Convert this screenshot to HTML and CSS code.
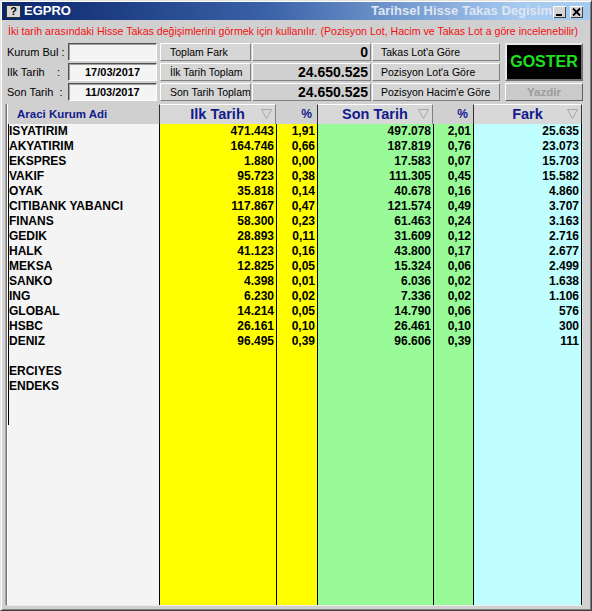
FILE: index.html
```html
<!DOCTYPE html>
<html lang="tr">
<head>
<meta charset="utf-8">
<title>EGPRO</title>
<link rel="stylesheet" href="styles.css">
</head>
<body>
<div class="window">
  <div class="titlebar">
    <div class="t-icon">?</div>
    <div class="t-name">EGPRO</div>
    <div class="t-caption">Tarihsel Hisse Takas Degisim</div>
    <div class="t-btn">
      <svg width="13" height="12" viewBox="0 0 13 12"><rect x="3" y="8" width="6" height="2" fill="#000"/></svg>
    </div>
    <div class="t-btn t-close">
      <svg width="13" height="12" viewBox="0 0 13 12"><path d="M3 2.5 L10 9.5 M10 2.5 L3 9.5" stroke="#000" stroke-width="1.8"/></svg>
    </div>
  </div>

  <div class="info">İki tarih arasındaki Hisse Takas değişimlerini görmek için kullanılır. (Pozisyon Lot, Hacim ve Takas Lot a göre incelenebilir)</div>

  <div class="form">
    <div class="lbl">Kurum Bul :</div>
    <div class="inp"></div>
    <div class="btn">Toplam Fark</div>
    <div class="val">0</div>
    <div class="btn btn-r">Takas Lot'a Göre</div>
    <div class="goster">GOSTER</div>

    <div class="lbl">Ilk Tarih&nbsp;&nbsp;&nbsp;&nbsp;:</div>
    <div class="inp">17/03/2017</div>
    <div class="btn">İlk Tarih Toplam</div>
    <div class="val">24.650.525</div>
    <div class="btn btn-r">Pozisyon Lot'a Göre</div>

    <div class="lbl">Son Tarih&nbsp;&nbsp;:</div>
    <div class="inp">11/03/2017</div>
    <div class="btn">Son Tarih Toplam</div>
    <div class="val">24.650.525</div>
    <div class="btn btn-r">Pozisyon Hacim'e Göre</div>
    <div class="yazdir">Yazdir</div>
  </div>

  <div class="grid">
    <div class="hd hd-name">Araci Kurum Adi</div>
    <div class="hd hd-btn">Ilk Tarih<svg class="tri" width="11" height="10" viewBox="0 0 11 10"><polygon points="0.5,0.5 10.5,0.5 5.5,9.5" fill="none" stroke="#a8a8a8"/></svg></div>
    <div class="hd hd-pct">%</div>
    <div class="hd hd-btn">Son Tarih<svg class="tri" width="11" height="10" viewBox="0 0 11 10"><polygon points="0.5,0.5 10.5,0.5 5.5,9.5" fill="none" stroke="#a8a8a8"/></svg></div>
    <div class="hd hd-pct">%</div>
    <div class="hd hd-btn hd-last">Fark<svg class="tri" width="11" height="10" viewBox="0 0 11 10"><polygon points="0.5,0.5 10.5,0.5 5.5,9.5" fill="none" stroke="#a8a8a8"/></svg></div>

    <div class="col col-name">
      <div class="names">
        <div>ISYATIRIM</div><div>AKYATIRIM</div><div>EKSPRES</div><div>VAKIF</div><div>OYAK</div>
        <div>CITIBANK YABANCI</div><div>FINANS</div><div>GEDIK</div><div>HALK</div><div>MEKSA</div>
        <div>SANKO</div><div>ING</div><div>GLOBAL</div><div>HSBC</div><div>DENIZ</div>
        <div>&nbsp;</div><div>ERCIYES</div><div>ENDEKS</div>
      </div>
    </div>
    <div class="col col-y num">
      <div>471.443</div><div>164.746</div><div>1.880</div><div>95.723</div><div>35.818</div>
      <div>117.867</div><div>58.300</div><div>28.893</div><div>41.123</div><div>12.825</div>
      <div>4.398</div><div>6.230</div><div>14.214</div><div>26.161</div><div>96.495</div>
    </div>
    <div class="col col-y num">
      <div>1,91</div><div>0,66</div><div>0,00</div><div>0,38</div><div>0,14</div>
      <div>0,47</div><div>0,23</div><div>0,11</div><div>0,16</div><div>0,05</div>
      <div>0,01</div><div>0,02</div><div>0,05</div><div>0,10</div><div>0,39</div>
    </div>
    <div class="col col-g num">
      <div>497.078</div><div>187.819</div><div>17.583</div><div>111.305</div><div>40.678</div>
      <div>121.574</div><div>61.463</div><div>31.609</div><div>43.800</div><div>15.324</div>
      <div>6.036</div><div>7.336</div><div>14.790</div><div>26.461</div><div>96.606</div>
    </div>
    <div class="col col-g num">
      <div>2,01</div><div>0,76</div><div>0,07</div><div>0,45</div><div>0,16</div>
      <div>0,49</div><div>0,24</div><div>0,12</div><div>0,17</div><div>0,06</div>
      <div>0,02</div><div>0,02</div><div>0,06</div><div>0,10</div><div>0,39</div>
    </div>
    <div class="col col-c num col-last">
      <div>25.635</div><div>23.073</div><div>15.703</div><div>15.582</div><div>4.860</div>
      <div>3.707</div><div>3.163</div><div>2.716</div><div>2.677</div><div>2.499</div>
      <div>1.638</div><div>1.106</div><div>576</div><div>300</div><div>111</div>
    </div>
  </div>
</div>
</body>
</html>
```

FILE: styles.css
```css
html, body {
  margin: 0;
  padding: 0;
  background: #d0d0d0;
}

body {
  font-family: "Liberation Sans", Arial, sans-serif;
  color: #000;
}

.window {
  box-sizing: border-box;
  width: 592px;
  height: 611px;
  padding: 1px;
  border: 1px solid;
  border-color: #e4e4e4 #404040 #404040 #e4e4e4;
  box-shadow: inset 1px 1px 0 #ffffff, inset -1px -1px 0 #808080;
  background: #d0d0d0;
  display: flex;
  flex-direction: column;
}

/* Title bar */
.titlebar {
  height: 18px;
  display: flex;
  align-items: center;
  background: linear-gradient(to right, #0a246a 0%, #3a62a8 45%, #a6caf0 88%, #a6caf0 100%);
  padding-right: 7px;
}

.t-icon {
  width: 13px;
  height: 11px;
  margin-left: 4px;
  background: #d8d8d8;
  border: 1px solid #303030;
  font: bold 11px/11px "Liberation Sans", Arial, sans-serif;
  text-align: center;
  color: #000;
}

.t-name {
  margin-left: 3px;
  color: #ffffff;
  font: bold 13px/18px "Liberation Sans", Arial, sans-serif;
}

.t-caption {
  margin-left: auto;
  margin-right: 1px;
  white-space: nowrap;
  color: #dfe6f2;
  font: bold 13px/18px "Liberation Sans", Arial, sans-serif;
}

.t-btn {
  box-sizing: border-box;
  width: 13px;
  height: 12px;
  margin-top: 1px;
  background: #d4d4d4;
  border: 0;
  box-shadow: inset 1px 1px 0 #ffffff, inset -1px -1px 0 #404040;
  display: flex;
}

.t-btn svg {
  display: block;
}

.t-close {
  margin-left: 4px;
}

/* Info line */
.info {
  height: 23px;
  padding-left: 6px;
  font: 10.6px/23px "Liberation Sans", Arial, sans-serif;
  color: #f01010;
  white-space: nowrap;
}

/* Form */
.form {
  display: grid;
  grid-template-columns: 61px 92px 92px 120px 133px 78px;
  grid-template-rows: 18px 18px 18px;
  row-gap: 2px;
  padding-left: 5px;
}

.lbl {
  font: 11px/18px "Liberation Sans", Arial, sans-serif;
  white-space: nowrap;
}

.inp {
  box-sizing: border-box;
  width: 89px;
  height: 18px;
  background: #f4f4f4;
  border: 1px solid;
  border-color: #505050 #ffffff #ffffff #505050;
  box-shadow: inset 1px 1px 0 #a0a0a0;
  font: bold 11px/16px "Liberation Sans", Arial, sans-serif;
  text-align: center;
}

.btn {
  box-sizing: border-box;
  width: 91px;
  height: 18px;
  padding-left: 9px;
  background: #d6d6d6;
  border: 1px solid;
  border-color: #ffffff #808080 #808080 #ffffff;
  font: 10.5px/16px "Liberation Sans", Arial, sans-serif;
  white-space: nowrap;
  overflow: hidden;
}

.btn-r {
  width: 128px;
  padding-left: 8px;
}

.val {
  box-sizing: border-box;
  width: 119px;
  height: 18px;
  padding-right: 2px;
  background: #d0d0d0;
  border: 1px solid;
  border-color: #ffffff #808080 #808080 #ffffff;
  font: bold 14px/16px "Liberation Sans", Arial, sans-serif;
  text-align: right;
}

.goster {
  grid-column: 6;
  grid-row: 1 / span 2;
  box-sizing: border-box;
  width: 78px;
  height: 38px;
  background: #000000;
  border: 2px solid;
  border-color: #e8e8e8 #707070 #707070 #e8e8e8;
  color: #1ee01e;
  font: bold 16px/34px "Liberation Sans", Arial, sans-serif;
  text-align: center;
}

.yazdir {
  grid-column: 6;
  grid-row: 3;
  box-sizing: border-box;
  width: 78px;
  height: 18px;
  background: #cacaca;
  border: 1px solid;
  border-color: #ffffff #606060 #606060 #ffffff;
  color: #9c9c9c;
  font: bold 11.5px/16px "Liberation Sans", Arial, sans-serif;
  text-align: center;
}

/* Grid */
.grid {
  margin: 3px 0 0 6px;
  width: 574px;
  height: 501px;
  display: grid;
  grid-template-columns: 151px 117px 41px 116px 40px 109px;
  grid-template-rows: 20px 481px;
  box-shadow: -1px 0 0 #ffffff, -2px 0 0 #707070, -3px 0 0 #a8a8a8, 1px 0 0 #e0e0e0, 0 1px 0 #ececec;
}

.hd {
  box-sizing: border-box;
  height: 20px;
  color: #121a8c;
  font-weight: bold;
  white-space: nowrap;
}

.hd-name {
  padding-left: 9px;
  font-size: 11.5px;
  line-height: 20px;
}

.hd-pct {
  text-align: right;
  padding-right: 5px;
  font-size: 12px;
  line-height: 20px;
}

.hd-btn {
  position: relative;
  background: #d8d8d8;
  border-top: 1px solid #ffffff;
  border-left: 1px solid #303030;
  border-right: 1px solid #808080;
  text-align: center;
  font-size: 14.5px;
  line-height: 19px;
}

.hd-last {
  border-right: 1px solid #303030;
}

.tri {
  position: absolute;
  right: 3px;
  top: 4px;
}

.col {
  box-sizing: border-box;
  font: bold 12px/15px "Liberation Sans", Arial, sans-serif;
  white-space: nowrap;
}

.col-name {
  background: #f4f4f4;
}

.names {
  border-left: 1px solid #000000;
  height: 301px;
  padding-left: 0;
}

.num {
  text-align: right;
  padding-right: 2px;
  border-left: 1px solid #000000;
}

.col-y {
  background: #ffff00;
}

.col-g {
  background: #98fb98;
}

.col-c {
  background: #c0ffff;
}

.col-last {
  border-right: 1px solid #000000;
}
```
